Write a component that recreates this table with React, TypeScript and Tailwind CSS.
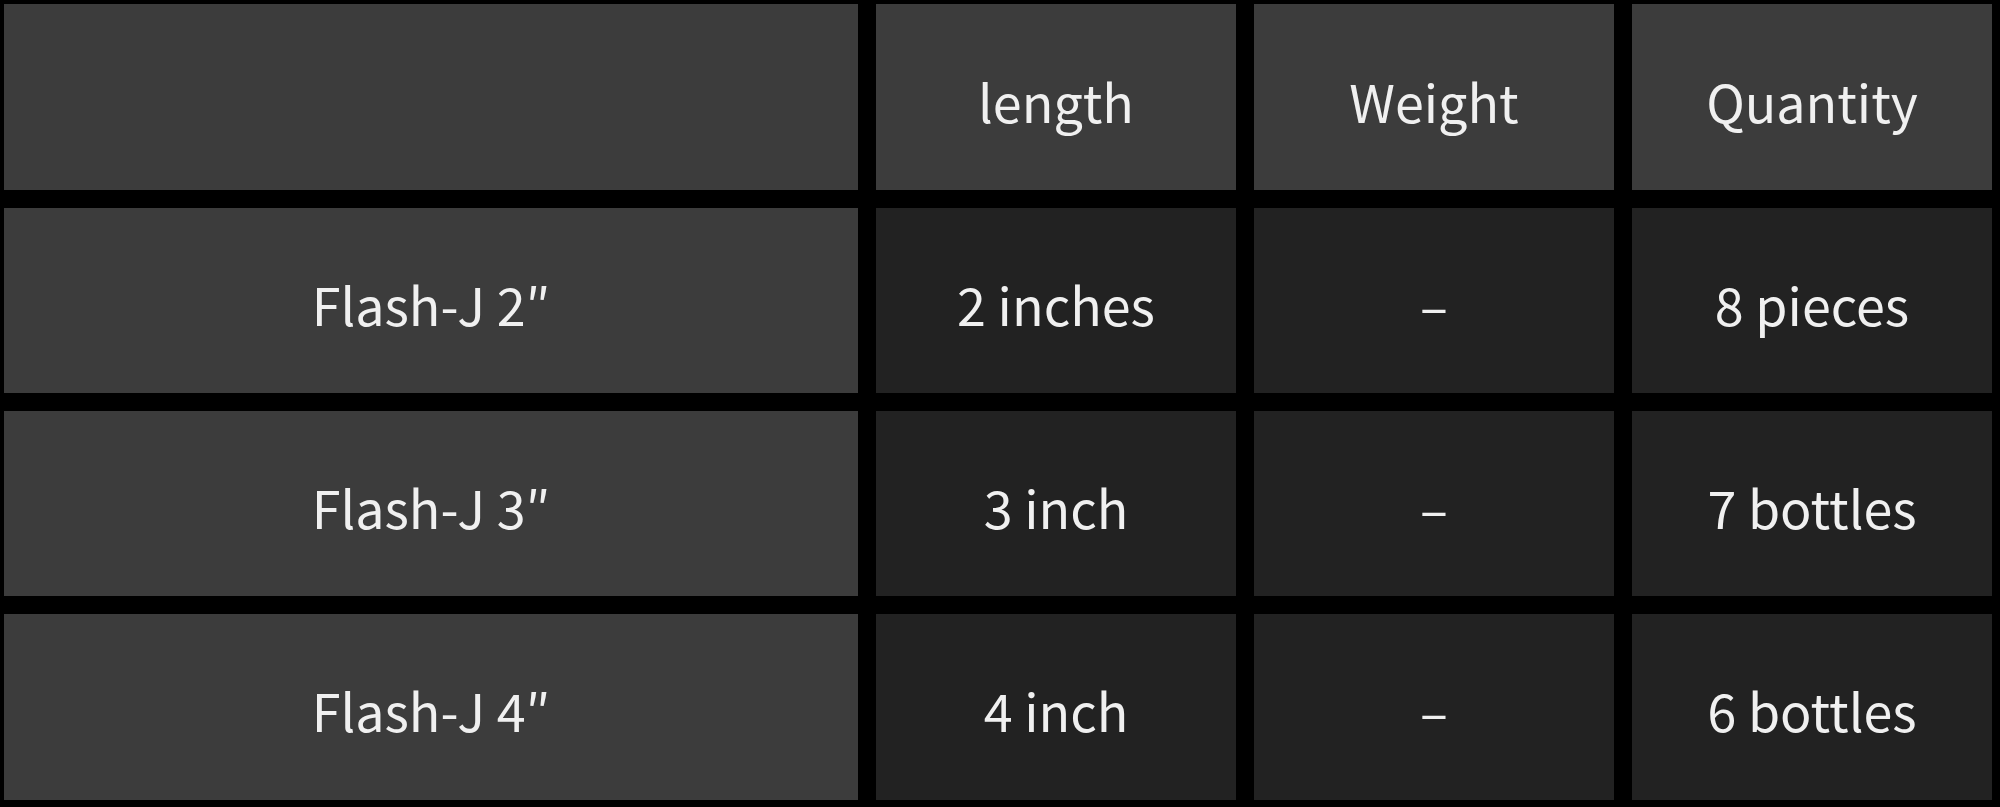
import React from "react";

const header = ["", "length", "Weight", "Quantity"];
const rows = [
  ["Flash-J 2″", "2 inches", "–", "8 pieces"],
  ["Flash-J 3″", "3 inch", "–", "7 bottles"],
  ["Flash-J 4″", "4 inch", "–", "6 bottles"],
];

export default function App() {
  return (
    <div
      className="w-[2000px] h-[807px] bg-black pl-[4px] pt-[4px] text-[#f0f0f0] text-[52px] leading-none"
      style={{ fontFamily: '"Noto Sans CJK KR", "Noto Sans", sans-serif' }}
    >
      <div className="grid grid-cols-[854px_360px_360px_360px] grid-rows-[186px_185px_185px_186px] gap-x-[18px] gap-y-[18px]">
        {header.map((h, i) => (
          <div key={"h" + i} className="bg-[#3c3c3c] flex items-center justify-center pt-[8px]">
            {h}
          </div>
        ))}
        {rows.map((r, ri) =>
          r.map((c, ci) => (
            <div
              key={ri + "-" + ci}
              className={
                (ci === 0 ? "bg-[#3c3c3c]" : "bg-[#222222]") +
                " flex items-center justify-center pt-[6px]"
              }
            >
              {c}
            </div>
          ))
        )}
      </div>
    </div>
  );
}
